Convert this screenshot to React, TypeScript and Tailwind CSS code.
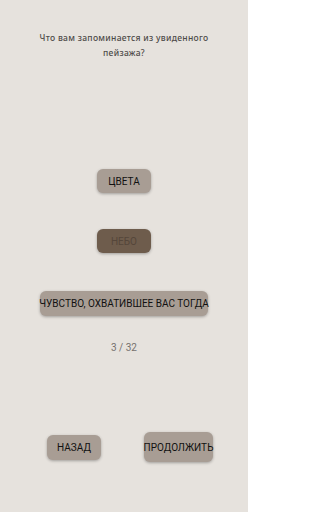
import React from "react";

const btnBase =
  "flex items-center justify-center rounded-[6px] shadow-[0_1px_3px_rgba(0,0,0,0.3)] font-normal uppercase";

export default function App() {
  return (
    <div
      className="w-[248px] h-[512px] bg-[#e6e2dd] flex flex-col items-center"
      style={{ fontFamily: "Roboto, 'Noto Sans', sans-serif" }}
    >
      <p
        className="mt-[30px] w-[200px] text-center text-[8.5px] font-medium leading-[15px] tracking-[0.3px] text-[#4d4a48]"
        style={{ fontFamily: "'Noto Sans', 'DejaVu Sans', sans-serif" }}
      >
        Что вам запоминается из увиденного пейзажа?
      </p>
      <div className={`${btnBase} mt-[109px] w-[54px] h-[24px] bg-[#a89d94] text-[10px] text-[#111]`}>
        ЦВЕТА
      </div>
      <div className={`${btnBase} mt-[36px] w-[54px] h-[24px] bg-[#6e5c4c] text-[10px] text-[#55463a]`}>
        НЕБО
      </div>
      <div className={`${btnBase} mt-[38px] w-[168px] h-[25px] bg-[#a89d94] text-[10px] text-[#111] whitespace-nowrap`}>
        ЧУВСТВО, ОХВАТИВШЕЕ ВАС ТОГДА
      </div>
      <div className="mt-[26px] text-[10px] text-[#75716e] leading-[12px]">3 / 32</div>
      <div className="mt-[78px] w-full flex items-center">
        <div className={`${btnBase} ml-[47px] w-[54px] h-[25px] bg-[#a89d94] text-[10px] text-[#111]`}>
          НАЗАД
        </div>
        <div className={`${btnBase} ml-[43px] w-[69px] h-[30px] bg-[#a89d94] text-[10px] text-[#111]`}>
          ПРОДОЛЖИТЬ
        </div>
      </div>
    </div>
  );
}
